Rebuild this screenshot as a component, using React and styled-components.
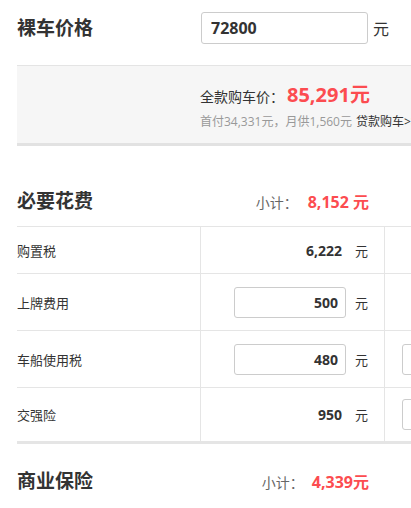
import React from "react";
import styled, { createGlobalStyle } from "styled-components";

const GlobalStyle = createGlobalStyle`
  body {
    margin: 0;
    background: #fff;
    overflow: hidden;
    font-family: "Open Sans", "Noto Sans CJK SC", sans-serif;
    color: #333;
  }
`;

const Page = styled.div`
  width: 640px;
  padding-left: 17px;
`;

const PriceRow = styled.div`
  display: flex;
  align-items: center;
  padding-top: 12px;
  height: 32px;
`;

const Title = styled.div`
  width: 184px;
  font-size: 19px;
  font-weight: 700;
  line-height: 26px;
  color: #333;
`;

const BigInput = styled.input`
  box-sizing: border-box;
  width: 167px;
  height: 32px;
  border: 1px solid #ccc;
  border-radius: 3px;
  padding: 0 9px;
  font-family: "Open Sans", sans-serif;
  font-size: 16px;
  font-weight: 700;
  color: #333;
  outline: none;
`;

const BigUnit = styled.span`
  margin-left: 5px;
  font-size: 16px;
  color: #333;
`;

const Summary = styled.div`
  margin-top: 21px;
  height: 61px;
  background: #f6f6f6;
  border-top: 1px solid #e4e4e4;
  border-bottom: 3px solid #e2e2e2;
  padding-left: 183px;
  padding-top: 16px;
`;

const TotalLine = styled.div`
  display: flex;
  align-items: baseline;
  font-size: 14px;
  color: #333;
  line-height: 26px;
`;

const Red = styled.span`
  color: #fc4c50;
  font-weight: 700;
  font-size: ${(p) => p.size || 16}px;
  margin-left: ${(p) => p.offset || 0}px;
`;

const LoanLine = styled.div`
  margin-top: 3px;
  font-size: 12px;
  color: #999;
  line-height: 18px;

  a {
    color: #333;
    text-decoration: none;
    margin-left: 4px;
  }
`;

const SectionHead = styled.div`
  width: 352px;
  display: flex;
  justify-content: space-between;
  align-items: center;
  padding: ${(p) => p.top}px 0 12px;
`;

const SubTotal = styled.div`
  display: flex;
  align-items: baseline;
  font-size: 14px;
  color: #666;

  span:first-child {
    margin-right: ${(p) => p.gap}px;
  }
`;

const Table = styled.div`
  border-top: 1px solid #e5e5e5;
  border-bottom: 3px solid #e5e5e5;
`;

const Row = styled.div`
  display: grid;
  grid-template-columns: 183px 185px 1fr;
  height: ${(p) => p.h}px;
  & + & {
    border-top: 1px solid #e5e5e5;
  }
`;

const Label = styled.div`
  display: flex;
  align-items: center;
  font-size: 13px;
  color: #333;
`;

const ValueCell = styled.div`
  display: flex;
  align-items: center;
  justify-content: flex-end;
  padding-right: 16px;
  border-left: 1px solid #e5e5e5;
  border-right: 1px solid #e5e5e5;
`;

const Value = styled.span`
  font-size: 14px;
  font-weight: 700;
  color: #333;
`;

const SmallInput = styled.input`
  box-sizing: border-box;
  width: 112px;
  height: 31px;
  border: 1px solid #ccc;
  border-radius: 3px;
  padding: 0 7px;
  text-align: right;
  font-family: "Open Sans", sans-serif;
  font-size: 14px;
  font-weight: 700;
  color: #333;
  outline: none;
`;

const Unit = styled.span`
  width: 13px;
  margin-left: ${(p) => (p.wide ? 13 : 9)}px;
  font-size: 13px;
  color: #333;
`;

const ExtraCell = styled.div`
  display: flex;
  align-items: center;
  padding-left: 17px;
`;

const rows = [
  { label: "购置税", value: "6,222", h: 46 },
  { label: "上牌费用", value: "500", input: true, h: 56 },
  { label: "车船使用税", value: "480", input: true, extra: true, h: 56 },
  { label: "交强险", value: "950", extra: true, h: 53 },
];

export default function App() {
  return (
    <Page>
      <GlobalStyle />
      <PriceRow>
        <Title>裸车价格</Title>
        <BigInput defaultValue="72800" />
        <BigUnit>元</BigUnit>
      </PriceRow>

      <Summary>
        <TotalLine>
          全款购车价：<Red size={20} offset={3}>85,291元</Red>
        </TotalLine>
        <LoanLine>
          首付34,331元，月供1,560元<a href="#">贷款购车&gt;&gt;</a>
        </LoanLine>
      </Summary>

      <SectionHead top={42}>
        <Title>必要花费</Title>
        <SubTotal gap={10}>
          <span>小计：</span>
          <Red>8,152 元</Red>
        </SubTotal>
      </SectionHead>

      <Table>
        {rows.map((r) => (
          <Row key={r.label} h={r.h}>
            <Label>{r.label}</Label>
            <ValueCell>
              {r.input ? (
                <SmallInput defaultValue={r.value} />
              ) : (
                <Value>{r.value}</Value>
              )}
              <Unit wide={!r.input}>元</Unit>
            </ValueCell>
            <ExtraCell>{r.extra && <SmallInput />}</ExtraCell>
          </Row>
        ))}
      </Table>

      <SectionHead top={24}>
        <Title>商业保险</Title>
        <SubTotal gap={8}>
          <span>小计：</span>
          <Red>4,339元</Red>
        </SubTotal>
      </SectionHead>
    </Page>
  );
}
